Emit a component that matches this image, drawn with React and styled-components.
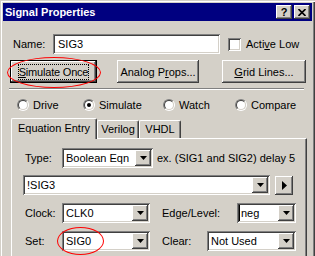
import styled, { createGlobalStyle } from 'styled-components';

const GlobalStyle = createGlobalStyle`
  html, body {
    margin: 0;
    padding: 0;
    overflow: hidden;
    background: #d4d0c8;
  }
  body {
    font-family: "Liberation Sans", Arial, sans-serif;
    font-size: 11px;
    color: #000;
  }
`;

const raised = `
  box-shadow: inset -1px -1px 0 #404040, inset 1px 1px 0 #ffffff,
    inset -2px -2px 0 #808080, inset 2px 2px 0 #d4d0c8;
`;

const sunken = `
  box-shadow: inset 1px 1px 0 #808080, inset -1px -1px 0 #ffffff,
    inset 2px 2px 0 #404040, inset -2px -2px 0 #d4d0c8;
`;

function DownArrow() {
  return (
    <svg width="7" height="4" viewBox="0 0 7 4">
      <polygon points="0,0 7,0 3.5,4" fill="#000" />
    </svg>
  );
}

function Combo({ value, w, caret }) {
  return (
    <ComboBox $w={w}>
      <ComboText $caret={caret}>{value}</ComboText>
      <DropButton>
        <DownArrow />
      </DropButton>
    </ComboBox>
  );
}

function Radio({ label, checked }) {
  return (
    <RadioItem>
      <RadioOuter>
        <RadioInner>{checked && <Dot />}</RadioInner>
      </RadioOuter>
      <span>{label}</span>
    </RadioItem>
  );
}

export default function App() {
  return (
    <>
      <GlobalStyle />
      <Window>
        <TitleBar>
          <Title>Signal Properties</Title>
          <CapButtons>
            <CapButton>?</CapButton>
            <CapButton>
              <svg width="8" height="7" viewBox="0 0 8 7">
                <path d="M0.5 0 L7.5 7 M7.5 0 L0.5 7" stroke="#000" strokeWidth="1.6" />
              </svg>
            </CapButton>
          </CapButtons>
        </TitleBar>

        <Body>
          <NameRow>
            <Label $w={40}>Name:</Label>
            <TextField>SIG3</TextField>
            <CheckBox />
            <CheckLabel>
              Acti<u>v</u>e Low
            </CheckLabel>
          </NameRow>

          <ButtonRow>
            <PushButton $w={87} $default>
              <FocusRect>
                <u>S</u>imulate Once
              </FocusRect>
            </PushButton>
            <PushButton $w={82} $ml={20}>
              Analog P<u>r</u>ops...
            </PushButton>
            <PushButton $w={84} $ml={23}>
              <u>G</u>rid Lines...
            </PushButton>
          </ButtonRow>

          <Separator />

          <RadioRow>
            <Radio label="Drive" />
            <Radio label="Simulate" checked />
            <Radio label="Watch" />
            <Radio label="Compare" />
          </RadioRow>

          <Tabs>
            <Tab $w={86} $active>
              Equation Entry
            </Tab>
            <Tab $w={42}>Verilog</Tab>
            <Tab $w={42}>VHDL</Tab>
          </Tabs>

          <Panel>
            <PanelRow $mt={0}>
              <Label $w={37}>Type:</Label>
              <Combo value="Boolean Eqn" w={91} />
              <Hint>ex. (SIG1 and SIG2) delay 5</Hint>
            </PanelRow>

            <PanelRow $mt={7} $ml={-2}>
              <Combo value="!SIG3" w={247} />
              <PlayButton>
                <svg width="5" height="9" viewBox="0 0 5 9">
                  <polygon points="0,0 5,4.5 0,9" fill="#000" />
                </svg>
              </PlayButton>
            </PanelRow>

            <PanelRow $mt={8}>
              <Label $w={37}>Clock:</Label>
              <Combo value="CLK0" w={88} />
              <Label $w={75} $ml={12}>
                Edge/Level:
              </Label>
              <Combo value="neg" w={59} caret />
            </PanelRow>

            <PanelRow $mt={8}>
              <Label $w={37}>Set:</Label>
              <Combo value="SIG0" w={88} />
              <Label $w={45} $ml={12}>
                Clear:
              </Label>
              <Combo value="Not Used" w={89} />
            </PanelRow>
          </Panel>
        </Body>

        <Ring $x={7} $y={57} $w={94} $h={31} />
        <Ring $x={57} $y={227} $w={47} $h={28} />
      </Window>
    </>
  );
}

const Window = styled.div`
  position: relative;
  width: 315px;
  height: 300px;
  box-sizing: border-box;
  padding: 3px;
  background: #d4d0c8;
  box-shadow: inset 1px 1px 0 #d4d0c8, inset 2px 2px 0 #ffffff,
    inset -1px -1px 0 #404040, inset -2px -2px 0 #808080;
`;

const TitleBar = styled.div`
  display: flex;
  align-items: center;
  height: 18px;
  padding: 0 2px;
  background: #000080;
`;

const Title = styled.div`
  flex: 1;
  color: #fff;
  font-weight: bold;
  font-size: 11px;
`;

const CapButtons = styled.div`
  display: flex;
  gap: 2px;
`;

const CapButton = styled.div`
  width: 16px;
  height: 14px;
  display: flex;
  align-items: center;
  justify-content: center;
  background: #d4d0c8;
  font-weight: bold;
  font-size: 11px;
  ${raised}
`;

const Body = styled.div`
  padding-left: 7px;
`;

const NameRow = styled.div`
  display: flex;
  align-items: center;
  margin-top: 13px;
  padding-left: 3px;
  height: 20px;
`;

const Label = styled.div`
  width: ${(p) => p.$w}px;
  margin-left: ${(p) => p.$ml || 0}px;
  flex-shrink: 0;
`;

const TextField = styled.div`
  width: 167px;
  height: 20px;
  box-sizing: border-box;
  padding-left: 5px;
  line-height: 20px;
  background: #fff;
  ${sunken}
`;

const CheckBox = styled.div`
  width: 13px;
  height: 13px;
  margin-left: 8px;
  background: #fff;
  ${sunken}
`;

const CheckLabel = styled.div`
  margin-left: 5px;
`;

const ButtonRow = styled.div`
  display: flex;
  margin-top: 6px;
  height: 23px;
`;

const PushButton = styled.div`
  width: ${(p) => p.$w}px;
  height: 23px;
  margin-left: ${(p) => p.$ml || 0}px;
  box-sizing: border-box;
  display: flex;
  align-items: center;
  justify-content: center;
  background: #d4d0c8;
  border: ${(p) => (p.$default ? '1px solid #000' : 'none')};
  ${raised}
`;

const FocusRect = styled.span`
  border: 1px dotted #000;
  padding: 1px 0;
  line-height: 12px;
  letter-spacing: -0.2px;
`;

const Separator = styled.div`
  width: 295px;
  margin: 5px 0 0 -1px;
  border-top: 1px solid #808080;
  border-bottom: 1px solid #ffffff;
`;

const RadioRow = styled.div`
  display: grid;
  grid-template-columns: 66px 80px 72px auto;
  align-items: center;
  height: 13px;
  margin-top: 8px;
  padding-left: 7px;
`;

const RadioItem = styled.div`
  display: flex;
  align-items: center;
  gap: 4px;
`;

const RadioOuter = styled.span`
  width: 12px;
  height: 12px;
  box-sizing: border-box;
  border-radius: 50%;
  border: 1px solid;
  border-color: #808080 #ffffff #ffffff #808080;
  display: flex;
`;

const RadioInner = styled.span`
  flex: 1;
  border-radius: 50%;
  border: 1px solid;
  border-color: #404040 #d4d0c8 #d4d0c8 #404040;
  background: #fff;
  display: flex;
  align-items: center;
  justify-content: center;
`;

const Dot = styled.span`
  width: 4px;
  height: 4px;
  border-radius: 50%;
  background: #000;
`;

const Tabs = styled.div`
  display: flex;
  align-items: flex-end;
  height: 20px;
  margin-top: 7px;
  margin-left: 1px;
`;

const Tab = styled.div`
  position: relative;
  z-index: ${(p) => (p.$active ? 1 : 0)};
  width: ${(p) => p.$w}px;
  height: ${(p) => (p.$active ? 21 : 18)}px;
  margin-bottom: ${(p) => (p.$active ? -1 : 0)}px;
  box-sizing: border-box;
  padding-top: ${(p) => (p.$active ? 3 : 2)}px;
  text-align: center;
  background: #d4d0c8;
  border-top: 1px solid #fff;
  border-left: 1px solid #fff;
  border-right: 1px solid #404040;
  border-radius: 2px 2px 0 0;
  box-shadow: inset -1px 0 0 #808080;
`;

const Panel = styled.div`
  width: 296px;
  height: 150px;
  margin-left: 1px;
  box-sizing: border-box;
  padding: 9px 0 0 13px;
  border-top: 1px solid #fff;
  border-left: 1px solid #fff;
  border-right: 1px solid #404040;
  border-bottom: 1px solid #404040;
  box-shadow: inset -1px -1px 0 #808080;
`;

const PanelRow = styled.div`
  display: flex;
  align-items: center;
  height: 20px;
  margin-top: ${(p) => p.$mt}px;
  margin-left: ${(p) => p.$ml || 0}px;
`;

const ComboBox = styled.div`
  width: ${(p) => p.$w}px;
  height: 20px;
  flex-shrink: 0;
  box-sizing: border-box;
  padding: 2px;
  display: flex;
  background: #fff;
  ${sunken}
`;

const ComboText = styled.div`
  flex: 1;
  padding-left: ${(p) => (p.$caret ? 1 : 2)}px;
  line-height: 16px;
  white-space: nowrap;
  overflow: hidden;
  border-left: ${(p) => (p.$caret ? '1px solid #000' : 'none')};
`;

const DropButton = styled.div`
  width: 16px;
  height: 16px;
  display: flex;
  align-items: center;
  justify-content: center;
  background: #d4d0c8;
  ${raised}
`;

const Hint = styled.div`
  margin-left: 4px;
  white-space: nowrap;
`;

const PlayButton = styled.div`
  width: 18px;
  height: 19px;
  margin-left: 5px;
  display: flex;
  align-items: center;
  justify-content: center;
  background: #d4d0c8;
  ${raised}
`;

const Ring = styled.div`
  position: absolute;
  left: ${(p) => p.$x}px;
  top: ${(p) => p.$y}px;
  width: ${(p) => p.$w}px;
  height: ${(p) => p.$h}px;
  box-sizing: border-box;
  border: 1px solid #f00;
  border-radius: 50%;
  pointer-events: none;
`;
